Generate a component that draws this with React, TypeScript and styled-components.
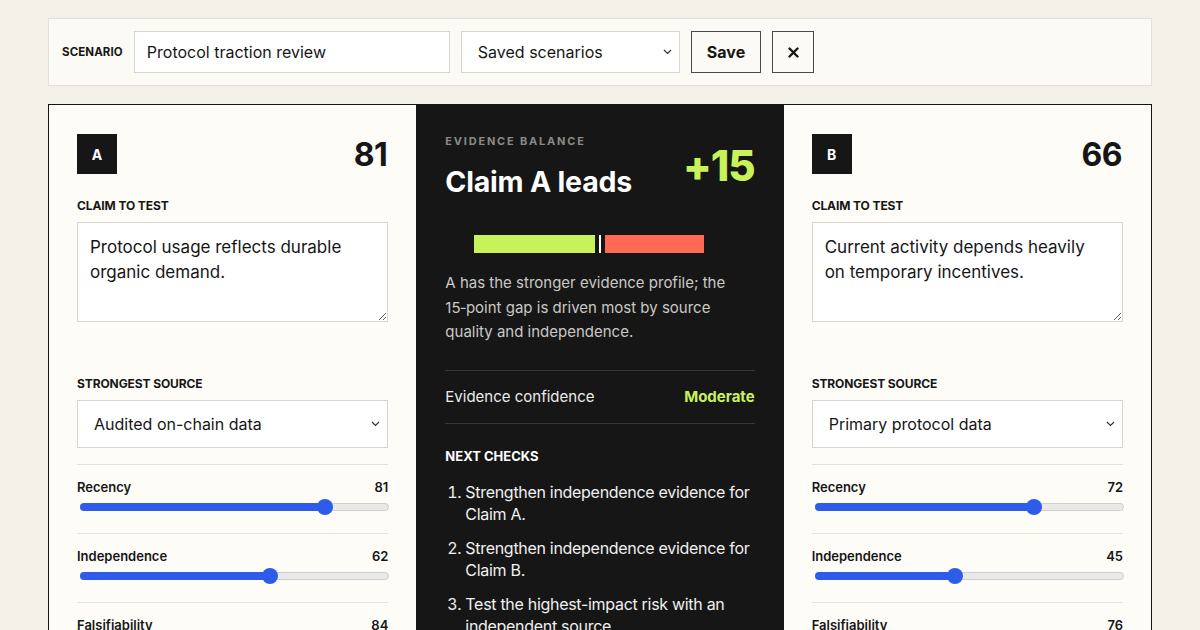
import React from 'react'
import styled, { createGlobalStyle } from 'styled-components'

const colors = {
  page: '#f3f0e8',
  paper: '#fdfcf7',
  ink: '#161616',
  line: '#e4e1d8',
  field: '#d9d6cd',
  lime: '#c8f25a',
  coral: '#ff6a55',
  blue: '#2f5bea'
}

const GlobalStyle = createGlobalStyle`
  * { box-sizing: border-box; }
  body {
    margin: 0;
    background: ${colors.page};
    font-family: Inter, "Noto Sans", "Liberation Sans", sans-serif;
    color: ${colors.ink};
  }
`

const Page = styled.div`
  width: 1104px;
  margin: 0 auto;
  padding-top: 18px;
  display: flex;
  flex-direction: column;
  gap: 18px;
`

const Toolbar = styled.div`
  display: flex;
  align-items: center;
  gap: 11px;
  padding: 12px 13px;
  background: #fbfaf4;
  border: 1px solid ${colors.line};
`
const ToolbarLabel = styled.span`
  font-size: 11.5px;
  font-weight: 700;
  letter-spacing: 0.1px;
`
const TextInput = styled.input`
  width: 316px;
  height: 42px;
  padding: 0 12px;
  border: 1px solid ${colors.field};
  background: #fff;
  font: inherit;
  font-size: 16px;
  color: ${colors.ink};
  outline: none;
`
const SelectWrap = styled.div<{ $width?: number }>`
  position: relative;
  width: ${p => (p.$width ? `${p.$width}px` : '100%')};
`
const Select = styled.select<{ $height: number; $pad: number }>`
  appearance: none;
  width: 100%;
  height: ${p => p.$height}px;
  padding: 0 30px 0 ${p => p.$pad}px;
  border: 1px solid ${colors.field};
  background: #fff;
  font: inherit;
  font-size: 16px;
  color: ${colors.ink};
  outline: none;
`
const Chevron = styled.svg`
  position: absolute;
  right: 8px;
  top: 50%;
  margin-top: -3px;
  pointer-events: none;
`
const Button = styled.button<{ $square?: boolean }>`
  height: 42px;
  padding: 0 ${p => (p.$square ? '0' : '15px')};
  width: ${p => (p.$square ? '42px' : 'auto')};
  border: 1px solid #4a4a4a;
  background: transparent;
  font: inherit;
  font-size: 16px;
  font-weight: 700;
  color: ${colors.ink};
  display: flex;
  align-items: center;
  justify-content: center;
`

const Board = styled.div`
  display: grid;
  grid-template-columns: 1fr 1fr 1fr;
  border: 1px solid ${colors.ink};
  background: ${colors.paper};
`

const ClaimColumn = styled.section`
  padding: 29px 28px 40px;
  display: flex;
  flex-direction: column;
`
const ClaimHead = styled.div`
  display: flex;
  justify-content: space-between;
  align-items: center;
  margin-bottom: 24px;
`
const Badge = styled.div`
  width: 40px;
  height: 40px;
  background: ${colors.ink};
  color: #fff;
  font-size: 14px;
  font-weight: 700;
  display: flex;
  align-items: center;
  justify-content: center;
`
const Score = styled.div`
  font-size: 32px;
  font-weight: 700;
  letter-spacing: -0.5px;
  margin-right: 1px;
`
const FieldLabel = styled.div`
  font-size: 12px;
  font-weight: 700;
  line-height: 16px;
  letter-spacing: -0.1px;
  margin-bottom: 8px;
`
const TextArea = styled.textarea`
  width: 100%;
  height: 100px;
  padding: 12px 22px 11px 12px;
  border: 1px solid ${colors.field};
  background: #fff;
  font: inherit;
  font-size: 17px;
  line-height: 25px;
  color: ${colors.ink};
  resize: vertical;
  outline: none;
  margin-bottom: 54px;
  display: block;
`
const SourceBlock = styled.div`
  margin-bottom: 16px;
`
const SliderRow = styled.div`
  border-top: 1px solid ${colors.line};
  padding: 14px 0 18px;
`
const SliderHead = styled.div`
  display: flex;
  justify-content: space-between;
  font-size: 13px;
  font-weight: 600;
  line-height: 16px;
  margin-bottom: 3px;
`
const Track = styled.div`
  position: relative;
  height: 17px;
  margin: 0 -1px 0 3px;
`
const TrackRail = styled.div`
  position: absolute;
  left: 0;
  right: 0;
  top: 5px;
  height: 8px;
  border-radius: 4px;
  background: #e9e9e9;
  border: 1px solid #cfcfcf;
`
const TrackFill = styled.div`
  position: absolute;
  left: 0;
  top: 5px;
  height: 8px;
  border-radius: 4px;
  background: ${colors.blue};
`
const Thumb = styled.div`
  position: absolute;
  top: 1px;
  width: 16px;
  height: 16px;
  border-radius: 50%;
  background: ${colors.blue};
`

const Summary = styled.section`
  background: ${colors.ink};
  color: #fff;
  padding: 29px 29px 40px 29px;
  display: flex;
  flex-direction: column;
`
const SummaryHead = styled.div`
  display: flex;
  justify-content: space-between;
  align-items: center;
`
const Eyebrow = styled.div`
  font-size: 11px;
  font-weight: 700;
  letter-spacing: 1.8px;
  color: #8a8a86;
  line-height: 14px;
  margin-bottom: 16px;
`
const Verdict = styled.h1`
  margin: 0;
  font-size: 28.5px;
  line-height: 36px;
  font-weight: 700;
  letter-spacing: -0.2px;
`
const Lead = styled.div`
  font-size: 42px;
  font-weight: 800;
  letter-spacing: -1px;
  color: ${colors.lime};
  line-height: 44px;
  margin-bottom: 2px;
`
const Balance = styled.div`
  margin-top: 35px;
  height: 18px;
  display: grid;
  grid-template-columns: 1fr 2px 1fr;
  gap: 4px;
`
const Half = styled.div<{ $side: 'left' | 'right' }>`
  display: flex;
  justify-content: ${p => (p.$side === 'left' ? 'flex-end' : 'flex-start')};
`
const BalanceSeg = styled.div<{ $color: string }>`
  height: 100%;
  background: ${p => p.$color};
`
const Marker = styled.div`
  background: #fff;
`
const Explain = styled.p`
  margin: 18px 0 25px;
  font-size: 15px;
  line-height: 24.5px;
  color: #c9c9c5;
`
const ConfidenceRow = styled.div`
  display: flex;
  justify-content: space-between;
  padding: 15px 0;
  border-top: 1px solid #363636;
  border-bottom: 1px solid #363636;
  font-size: 15px;
  line-height: 22px;
  color: #ececec;
`
const Confidence = styled.span`
  color: ${colors.lime};
  font-weight: 700;
`
const ChecksTitle = styled.div`
  margin-top: 24px;
  font-size: 13px;
  font-weight: 700;
  line-height: 16px;
`
const Checks = styled.ol`
  margin: 17px 0 0;
  padding-left: 20px;
  display: flex;
  flex-direction: column;
  gap: 12px;
`
const Check = styled.li`
  font-size: 16px;
  line-height: 22px;
  letter-spacing: -0.3px;
  color: #f0f0f0;
`

type Metric = { label: string; value: number }
type Claim = {
  letter: string
  score: number
  text: string
  source: string
  metrics: Metric[]
}

const claims: Claim[] = [
  {
    letter: 'A',
    score: 81,
    text: 'Protocol usage reflects durable organic demand.',
    source: 'Audited on-chain data',
    metrics: [
      { label: 'Recency', value: 81 },
      { label: 'Independence', value: 62 },
      { label: 'Falsifiability', value: 84 }
    ]
  },
  {
    letter: 'B',
    score: 66,
    text: 'Current activity depends heavily on temporary incentives.',
    source: 'Primary protocol data',
    metrics: [
      { label: 'Recency', value: 72 },
      { label: 'Independence', value: 45 },
      { label: 'Falsifiability', value: 76 }
    ]
  }
]

const sources = [
  'Audited on-chain data',
  'Primary protocol data',
  'Independent research',
  'Anecdotal reports'
]

const ChevronIcon = () => (
  <Chevron width="9" height="6" viewBox="0 0 9 6">
    <path d="M1 1l3.5 3.5L8 1" fill="none" stroke="#333" strokeWidth="1.2" />
  </Chevron>
)

const CloseIcon = () => (
  <svg width="11" height="11" viewBox="0 0 11 11">
    <path d="M1.5 1.5l8 8M9.5 1.5l-8 8" stroke={colors.ink} strokeWidth="2.4" strokeLinecap="round" />
  </svg>
)

const Slider = ({ value }: { value: number }) => {
  const [width, setWidth] = React.useState(308)
  const ref = React.useRef<HTMLDivElement>(null)
  React.useLayoutEffect(() => {
    if (ref.current) setWidth(ref.current.offsetWidth)
  }, [])
  const left = (value / 100) * (width - 16)
  return (
    <Track ref={ref}>
      <TrackRail />
      <TrackFill style={{ width: left + 8 }} />
      <Thumb style={{ left }} />
    </Track>
  )
}

const ClaimPanel = ({ claim }: { claim: Claim }) => (
  <ClaimColumn>
    <ClaimHead>
      <Badge>{claim.letter}</Badge>
      <Score>{claim.score}</Score>
    </ClaimHead>
    <FieldLabel>CLAIM TO TEST</FieldLabel>
    <TextArea defaultValue={claim.text} />
    <SourceBlock>
      <FieldLabel>STRONGEST SOURCE</FieldLabel>
      <SelectWrap>
        <Select $height={48} $pad={16} defaultValue={claim.source}>
          {sources.map(s => (
            <option key={s}>{s}</option>
          ))}
        </Select>
        <ChevronIcon />
      </SelectWrap>
    </SourceBlock>
    {claim.metrics.map(m => (
      <SliderRow key={m.label}>
        <SliderHead>
          <span>{m.label}</span>
          <span>{m.value}</span>
        </SliderHead>
        <Slider value={m.value} />
      </SliderRow>
    ))}
  </ClaimColumn>
)

const App = () => {
  const [a, b] = claims
  const gap = a.score - b.score
  return (
    <>
      <GlobalStyle />
      <Page>
        <Toolbar>
          <ToolbarLabel>SCENARIO</ToolbarLabel>
          <TextInput defaultValue="Protocol traction review" />
          <SelectWrap $width={219}>
            <Select $height={42} $pad={16} defaultValue="">
              <option value="">Saved scenarios</option>
              <option>Q3 liquidity check</option>
            </Select>
            <ChevronIcon />
          </SelectWrap>
          <Button>Save</Button>
          <Button $square aria-label="Clear">
            <CloseIcon />
          </Button>
        </Toolbar>
        <Board>
          <ClaimPanel claim={a} />
          <Summary>
            <SummaryHead>
              <div>
                <Eyebrow>EVIDENCE BALANCE</Eyebrow>
                <Verdict>Claim A leads</Verdict>
              </div>
              <Lead>+{gap}</Lead>
            </SummaryHead>
            <Balance>
              <Half $side="left">
                <BalanceSeg $color={colors.lime} style={{ width: `${a.score}%` }} />
              </Half>
              <Marker />
              <Half $side="right">
                <BalanceSeg $color={colors.coral} style={{ width: `${b.score}%` }} />
              </Half>
            </Balance>
            <Explain>
              A has the stronger evidence profile; the {gap}&#8209;point gap is driven most by
              source quality and independence.
            </Explain>
            <ConfidenceRow>
              <span>Evidence confidence</span>
              <Confidence>Moderate</Confidence>
            </ConfidenceRow>
            <ChecksTitle>NEXT CHECKS</ChecksTitle>
            <Checks>
              <Check>Strengthen independence evidence for Claim A.</Check>
              <Check>Strengthen independence evidence for Claim B.</Check>
              <Check>Test the highest-impact risk with an independent source.</Check>
            </Checks>
          </Summary>
          <ClaimPanel claim={b} />
        </Board>
      </Page>
    </>
  )
}

export default App
